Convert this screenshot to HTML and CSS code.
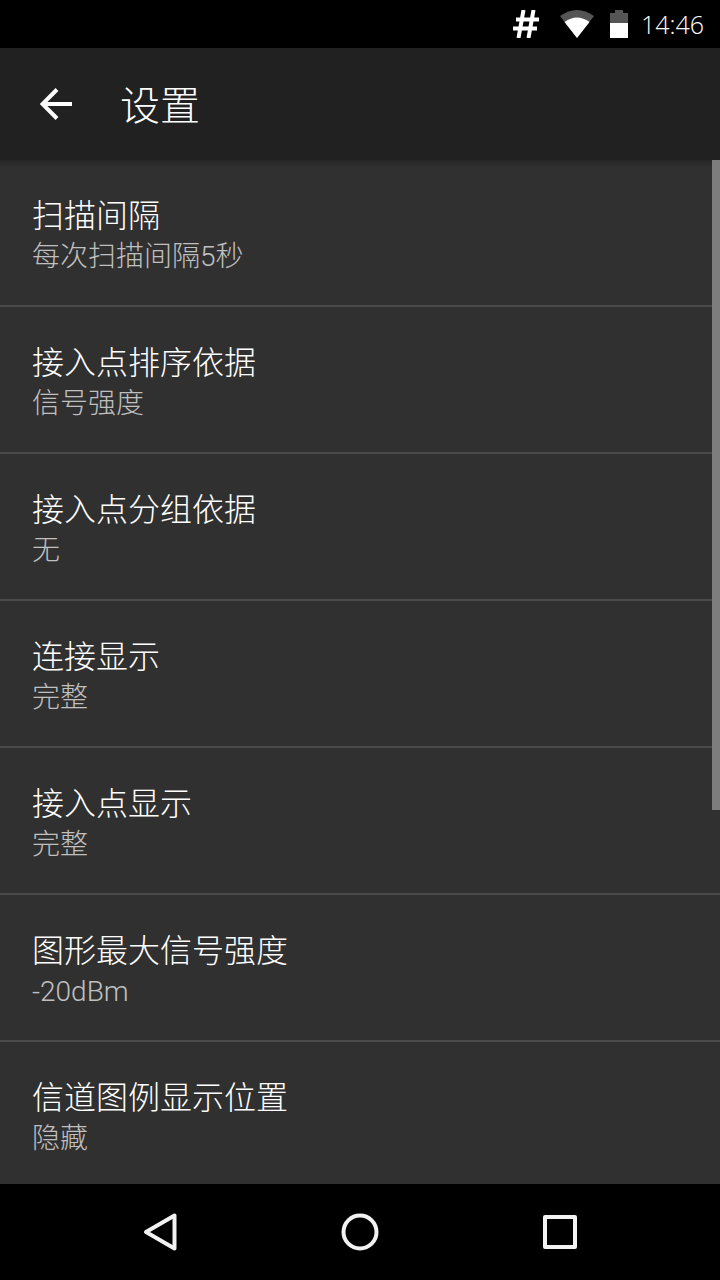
FILE: index.html
```html
<!DOCTYPE html>
<html lang="zh-CN">
<head>
<meta charset="utf-8">
<meta name="viewport" content="width=device-width, initial-scale=1">
<title>设置</title>
<link rel="stylesheet" href="styles.css">
</head>
<body>
<div class="screen">
  <div class="status-bar">
    <svg class="status-hash" width="28" height="28" viewBox="0 0 28 28" aria-hidden="true">
      <path d="M11.500 0L6.500 28M21.500 0L16.500 28M4 9.500H27M1 18.500H25" fill="none" stroke="#fff" stroke-width="4"/>
    </svg>
    <svg class="status-wifi" width="34" height="28" viewBox="0 0 34 28" aria-hidden="true">
      <path d="M0 6Q17 -6 34 6L17 28Z" fill="#555"/>
      <path d="M4.500 12Q17 3 29.500 12L17 28Z" fill="#fff"/>
    </svg>
    <svg class="status-battery" width="18" height="28" viewBox="0 0 18 28" aria-hidden="true">
      <path d="M0 3H5V0H13V3H18V13H0Z" fill="#555"/>
      <path d="M0 13H18V28H0Z" fill="#fff"/>
    </svg>
    <time class="clock">14:46</time>
  </div>

  <header class="app-bar">
    <button class="back" type="button" aria-label="返回">
      <svg width="32" height="32" viewBox="0 0 32 32" aria-hidden="true">
        <path d="M32 16H3M17 1.500L2.500 16L17 30.500" fill="none" stroke="#fff" stroke-width="4"/>
      </svg>
    </button>
    <h1 class="title">设置</h1>
  </header>

  <main class="content">
    <ul class="settings">
      <li class="setting"><button class="row" type="button"><span class="name">扫描间隔</span><span class="value">每次扫描间隔5秒</span></button></li>
      <li class="setting"><button class="row" type="button"><span class="name">接入点排序依据</span><span class="value">信号强度</span></button></li>
      <li class="setting"><button class="row" type="button"><span class="name">接入点分组依据</span><span class="value">无</span></button></li>
      <li class="setting"><button class="row" type="button"><span class="name">连接显示</span><span class="value">完整</span></button></li>
      <li class="setting"><button class="row" type="button"><span class="name">接入点显示</span><span class="value">完整</span></button></li>
      <li class="setting"><button class="row" type="button"><span class="name">图形最大信号强度</span><span class="value">-20dBm</span></button></li>
      <li class="setting"><button class="row" type="button"><span class="name">信道图例显示位置</span><span class="value">隐藏</span></button></li>
    </ul>
    <div class="scroll-thumb"></div>
  </main>

  <nav class="nav-bar">
    <button class="nav-button" type="button" aria-label="后退">
      <svg width="40" height="40" viewBox="0 0 40 40" aria-hidden="true">
        <path d="M34.500 3.500V36.500L6 20Z" fill="none" stroke="#f2f2f2" stroke-width="4" stroke-linejoin="round"/>
      </svg>
    </button>
    <button class="nav-button" type="button" aria-label="主屏幕">
      <svg width="40" height="40" viewBox="0 0 40 40" aria-hidden="true">
        <circle cx="20" cy="20" r="16.500" fill="none" stroke="#f2f2f2" stroke-width="4"/>
      </svg>
    </button>
    <button class="nav-button" type="button" aria-label="最近任务">
      <svg width="40" height="40" viewBox="0 0 40 40" aria-hidden="true">
        <rect x="5" y="5" width="30" height="30" fill="none" stroke="#f2f2f2" stroke-width="4" stroke-linejoin="round"/>
      </svg>
    </button>
  </nav>
</div>
</body>
</html>
```

FILE: styles.css
```css
* {
  box-sizing: border-box;
}

body {
  margin: 0;
  background: #000;
  color: #fff;
  font-family: Roboto, "Noto Sans CJK SC", sans-serif;
  font-weight: 300;
}

button {
  margin: 0;
  padding: 0;
  border: 0;
  background: none;
  color: inherit;
  font: inherit;
}

svg {
  display: block;
}

.screen {
  display: flex;
  flex-direction: column;
  height: 100vh;
}

.status-bar {
  display: flex;
  flex: none;
  align-items: center;
  justify-content: flex-end;
  height: 48px;
  padding-right: 16px;
  background: #000;
}

.status-hash {
  margin-right: 20px;
}

.status-wifi {
  margin-right: 16px;
}

.status-battery {
  margin-right: 13px;
}

.clock {
  font-family: "Open Sans", sans-serif;
  font-size: 25px;
  line-height: 48px;
}

.app-bar {
  display: flex;
  flex: none;
  align-items: center;
  height: 112px;
  padding: 0 40px;
  gap: 48px;
  background: #212121;
}

.title {
  margin: 0;
  padding-top: 6px;
  font-size: 40px;
  font-weight: 300;
  line-height: 56px;
}

.content {
  position: relative;
  flex: 1;
  min-height: 0;
  overflow: hidden;
  background: linear-gradient(#262626, #303030 8px);
}

.settings {
  margin: 0;
  padding: 0;
  list-style: none;
}

.setting {
  border-bottom: 2px solid #4a4a4a;
}

.row {
  display: flex;
  flex-direction: column;
  width: 100%;
  padding: 35px 32px 28px;
  text-align: left;
}

.name {
  font-size: 32px;
  line-height: 42px;
}

.value {
  color: #c0c0c0;
  font-size: 28px;
  line-height: 40px;
}

.scroll-thumb {
  position: absolute;
  top: 0;
  right: 0;
  width: 8px;
  height: 63.5%;
  background: #7d7d7d;
}

.nav-bar {
  display: flex;
  flex: none;
  justify-content: center;
  height: 96px;
  background: #000;
}

.nav-button {
  display: flex;
  align-items: center;
  justify-content: center;
  width: 200px;
}
```
